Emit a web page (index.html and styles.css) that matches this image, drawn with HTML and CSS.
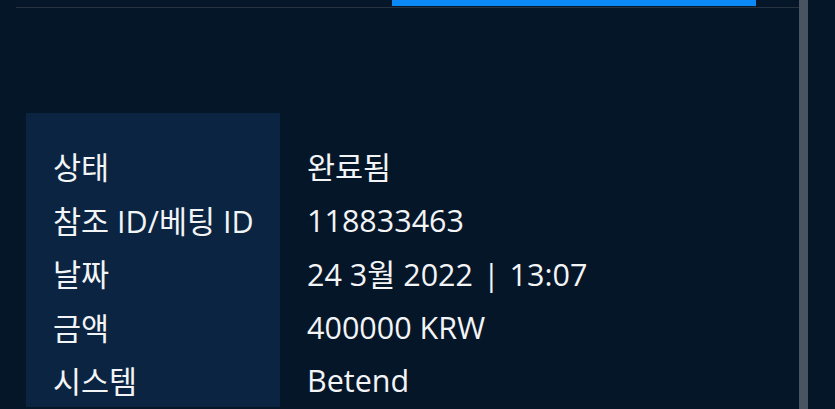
FILE: index.html
```html
<!DOCTYPE html>
<html lang="ko">

<head>
    <meta charset="UTF-8">
    <meta name="viewport" content="width=device-width, initial-scale=1.0">
    <title>거래 상세</title>
    <link rel="stylesheet" href="styles.css">
</head>

<body>
    <div class="pagina">
        <div class="contenido">
            <div class="pestanas">
                <div class="pestana"></div>
                <div class="pestana activa"></div>
            </div>
            <table class="detalle">
                <tr>
                    <th>상태</th>
                    <td>완료됨</td>
                </tr>
                <tr>
                    <th>참조 ID/베팅 ID</th>
                    <td>118833463</td>
                </tr>
                <tr>
                    <th>날짜</th>
                    <td>24 3월 2022 <span class="separador">|</span> 13:07</td>
                </tr>
                <tr>
                    <th>금액</th>
                    <td>400000 KRW</td>
                </tr>
                <tr>
                    <th>시스템</th>
                    <td>Betend</td>
                </tr>
            </table>
        </div>
        <div class="barra"></div>
    </div>
</body>

</html>
```

FILE: styles.css
```css
html,
body {
    margin: 0;
    height: 100%;
    background-color: #061629;
    overflow: hidden;
}

body {
    font-family: "Open Sans", "Noto Sans CJK KR", sans-serif;
    color: #f2f4f6;
}

.pagina {
    display: flex;
    height: 100%;
}

.contenido {
    width: 783px;
    padding-left: 16px;
}

.barra {
    width: 9px;
    background-color: #4a5461;
}

.pestanas {
    display: flex;
    height: 7px;
    border-bottom: 1px solid #27333f;
    padding-left: 376px;
}

.pestana {
    display: none;
}

.pestana.activa {
    display: block;
    width: 364px;
    height: 6px;
    background-color: #0a89f7;
}

.detalle {
    margin: 105px 0 0 10px;
    border-collapse: collapse;
    font-size: 30.5px;
}

.detalle th,
.detalle td {
    height: 53.5px;
    padding: 0;
    font-weight: normal;
    text-align: left;
    white-space: nowrap;
}

.detalle th {
    width: 227px;
    padding-left: 27px;
    background-color: #0a2441;
}

.detalle td {
    padding-left: 27px;
}

.detalle tr:first-child th,
.detalle tr:first-child td {
    height: 80px;
    padding-top: 26px;
    box-sizing: border-box;
}

.separador {
    margin: 0 2px;
}
```
